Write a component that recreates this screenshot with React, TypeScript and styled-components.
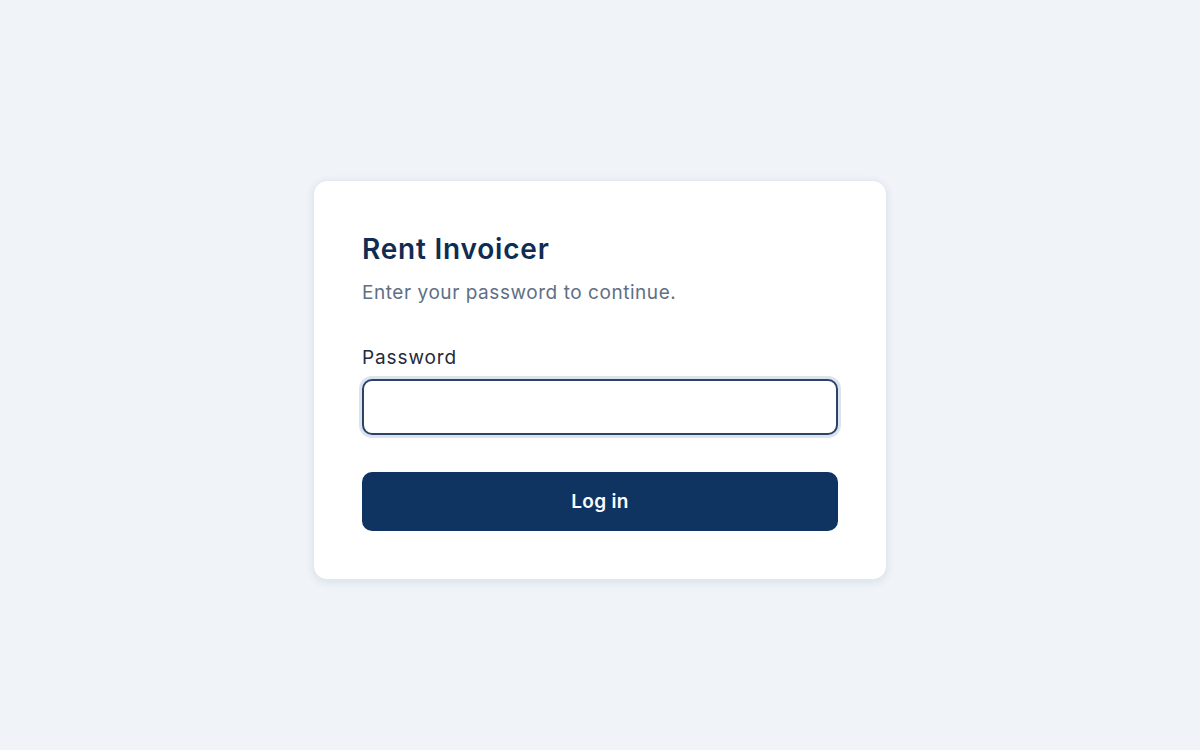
import React from 'react';
import styled, { createGlobalStyle } from 'styled-components';

const GlobalStyle = createGlobalStyle`
  * { box-sizing: border-box; }
  body {
    margin: 0;
    background: #f0f4f9;
    font-family: Inter, "Noto Sans", "Liberation Sans", sans-serif;
    color: #1e293b;
  }
`;

const Page = styled.main`
  min-height: 100vh;
  display: flex;
  align-items: center;
  justify-content: center;
  padding-top: 9px;
`;

const Card = styled.form`
  width: 574px;
  background: #ffffff;
  border-radius: 14px;
  border: 1px solid #e3e8ef;
  box-shadow: 0 2px 8px rgba(15, 35, 70, 0.1);
  padding: 51px 48px 48px;
  display: flex;
  flex-direction: column;
`;

const Title = styled.h1`
  margin: 0;
  font-size: 28px;
  line-height: 34px;
  font-weight: 600;
  color: #0f2c52;
  letter-spacing: 0.8px;
`;

const Subtitle = styled.p`
  margin: 13px 0 0;
  font-size: 19px;
  line-height: 27px;
  color: #5f6f84;
  letter-spacing: 0.55px;
`;

const Label = styled.label`
  margin-top: 38px;
  font-size: 19px;
  line-height: 27px;
  color: #1f2a3c;
  letter-spacing: 0.9px;
`;

const Input = styled.input`
  margin-top: 8px;
  height: 56px;
  width: 100%;
  border: 2px solid #2b4466;
  border-radius: 10px;
  box-shadow: 0 0 0 3px #dbe3ef;
  font-size: 18px;
  padding: 0 14px;
  outline: none;
  background: #fff;
`;

const Button = styled.button`
  margin-top: 37px;
  height: 59px;
  width: 100%;
  border: none;
  border-radius: 10px;
  background: #0f3461;
  color: #ffffff;
  font-family: inherit;
  font-size: 19px;
  font-weight: 600;
  letter-spacing: 0.3px;
  cursor: pointer;
`;

export default function App() {
  return (
    <>
      <GlobalStyle />
      <Page>
        <Card onSubmit={(e) => e.preventDefault()}>
          <Title>Rent Invoicer</Title>
          <Subtitle>Enter your password to continue.</Subtitle>
          <Label htmlFor="password">Password</Label>
          <Input id="password" type="password" />
          <Button type="submit">Log in</Button>
        </Card>
      </Page>
    </>
  );
}
